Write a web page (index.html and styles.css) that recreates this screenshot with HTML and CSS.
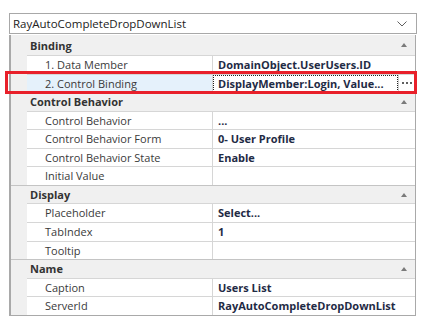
FILE: index.html
```html
<!DOCTYPE html>
<html>
<head>
  <title>Property Grid</title>
  <link rel="stylesheet" href="styles.css">
</head>
<body>
  <div class="panel">
    <div class="combo">
      <span class="combo-text">RayAutoCompleteDropDownList</span>
      <svg class="chevron" width="10" height="6" viewBox="0 0 10 6"><path d="M0.5 0.5 L5 5 L9.5 0.5" fill="none" stroke="#606060" stroke-width="1"/></svg>
    </div>

    <div class="grid">
      <div class="category first">
        <span>Binding</span><span class="arrow"></span>
      </div>
      <div class="row">
        <div class="label">1. Data Member</div>
        <div class="value">DomainObject.UserUsers.ID</div>
      </div>
      <div class="row selected">
        <div class="label">2. Control Binding</div>
        <div class="value editing">
          <span class="edit-text">DisplayMember:Login, Value...</span>
          <span class="dots">
            <svg width="11" height="3" viewBox="0 0 11 3"><rect x="0" y="0" width="2" height="2" fill="#606060"/><rect x="4" y="0" width="2" height="2" fill="#606060"/><rect x="8" y="0" width="2" height="2" fill="#606060"/></svg>
          </span>
        </div>
      </div>

      <div class="category">
        <span>Control Behavior</span><span class="arrow"></span>
      </div>
      <div class="row">
        <div class="label">Control Behavior</div>
        <div class="value">...</div>
      </div>
      <div class="row">
        <div class="label">Control Behavior Form</div>
        <div class="value">0- User Profile</div>
      </div>
      <div class="row">
        <div class="label">Control Behavior State</div>
        <div class="value">Enable</div>
      </div>
      <div class="row">
        <div class="label">Initial Value</div>
        <div class="value"></div>
      </div>

      <div class="category">
        <span>Display</span><span class="arrow"></span>
      </div>
      <div class="row">
        <div class="label">Placeholder</div>
        <div class="value">Select...</div>
      </div>
      <div class="row">
        <div class="label">TabIndex</div>
        <div class="value">1</div>
      </div>
      <div class="row">
        <div class="label">Tooltip</div>
        <div class="value"></div>
      </div>

      <div class="category">
        <span>Name</span><span class="arrow"></span>
      </div>
      <div class="row">
        <div class="label">Caption</div>
        <div class="value">Users List</div>
      </div>
      <div class="row">
        <div class="label">ServerId</div>
        <div class="value">RayAutoCompleteDropDownList</div>
      </div>
    </div>

    <div class="highlight"></div>
  </div>
</body>
</html>
```

FILE: styles.css
```css
body {
  margin: 0;
  background: #fff;
  font-family: "Open Sans", "Noto Sans", sans-serif;
  font-size: 11px;
}
.panel {
  position: relative;
  padding: 13px 0 0 9px;
  width: 408px;
}
.combo {
  display: flex;
  align-items: center;
  justify-content: space-between;
  height: 19px;
  border: 1px solid #a8a8a8;
  padding: 0 9px 0 3px;
  color: #222;
  font-size: 11.5px;
}
.grid {
  margin-top: 1px;
  width: 404px;
  background: #f0f0f0;
  border-left: 2px solid #a9a9a9;
  border-right: 1px solid #a9a9a9;
  border-bottom: 1px solid #a9a9a9;
}
.category {
  display: flex;
  align-items: center;
  justify-content: space-between;
  box-sizing: border-box;
  height: 18.6px;
  padding: 0 8px 0 19px;
  border-top: 1px solid #c4c4c4;
  font-weight: bold;
  color: #333;
}
.category.first {
  height: 20px;
  border-top: none;
}
.arrow {
  width: 0;
  height: 0;
  border-left: 3.5px solid transparent;
  border-right: 3.5px solid transparent;
  border-bottom: 4px solid #7a7a7a;
}
.row {
  display: flex;
  box-sizing: border-box;
  height: 18.55px;
  margin-left: 16px;
  border-top: 1px solid #d6d6d6;
  background: #fff;
}
.label {
  width: 167px;
  padding-left: 18px;
  line-height: 17px;
  color: #3a3a3a;
}
.value {
  flex: 1;
  border-left: 1px solid #d6d6d6;
  padding-left: 5px;
  line-height: 17px;
  font-weight: bold;
  color: #1f2b45;
  white-space: nowrap;
  overflow: hidden;
}
.selected .label {
  background: #e5f1fb;
}
.value.editing {
  display: flex;
  padding-left: 0;
}
.edit-text {
  flex: 1;
  padding-left: 4px;
  border: 1px dotted #222;
  line-height: 15px;
}
.dots {
  display: flex;
  align-items: center;
  justify-content: center;
  width: 16px;
  border-left: 1px solid #d0d0d0;
}
.highlight {
  position: absolute;
  left: 5px;
  top: 71px;
  width: 406px;
  height: 17px;
  border: 3px solid #e8202a;
}
```
